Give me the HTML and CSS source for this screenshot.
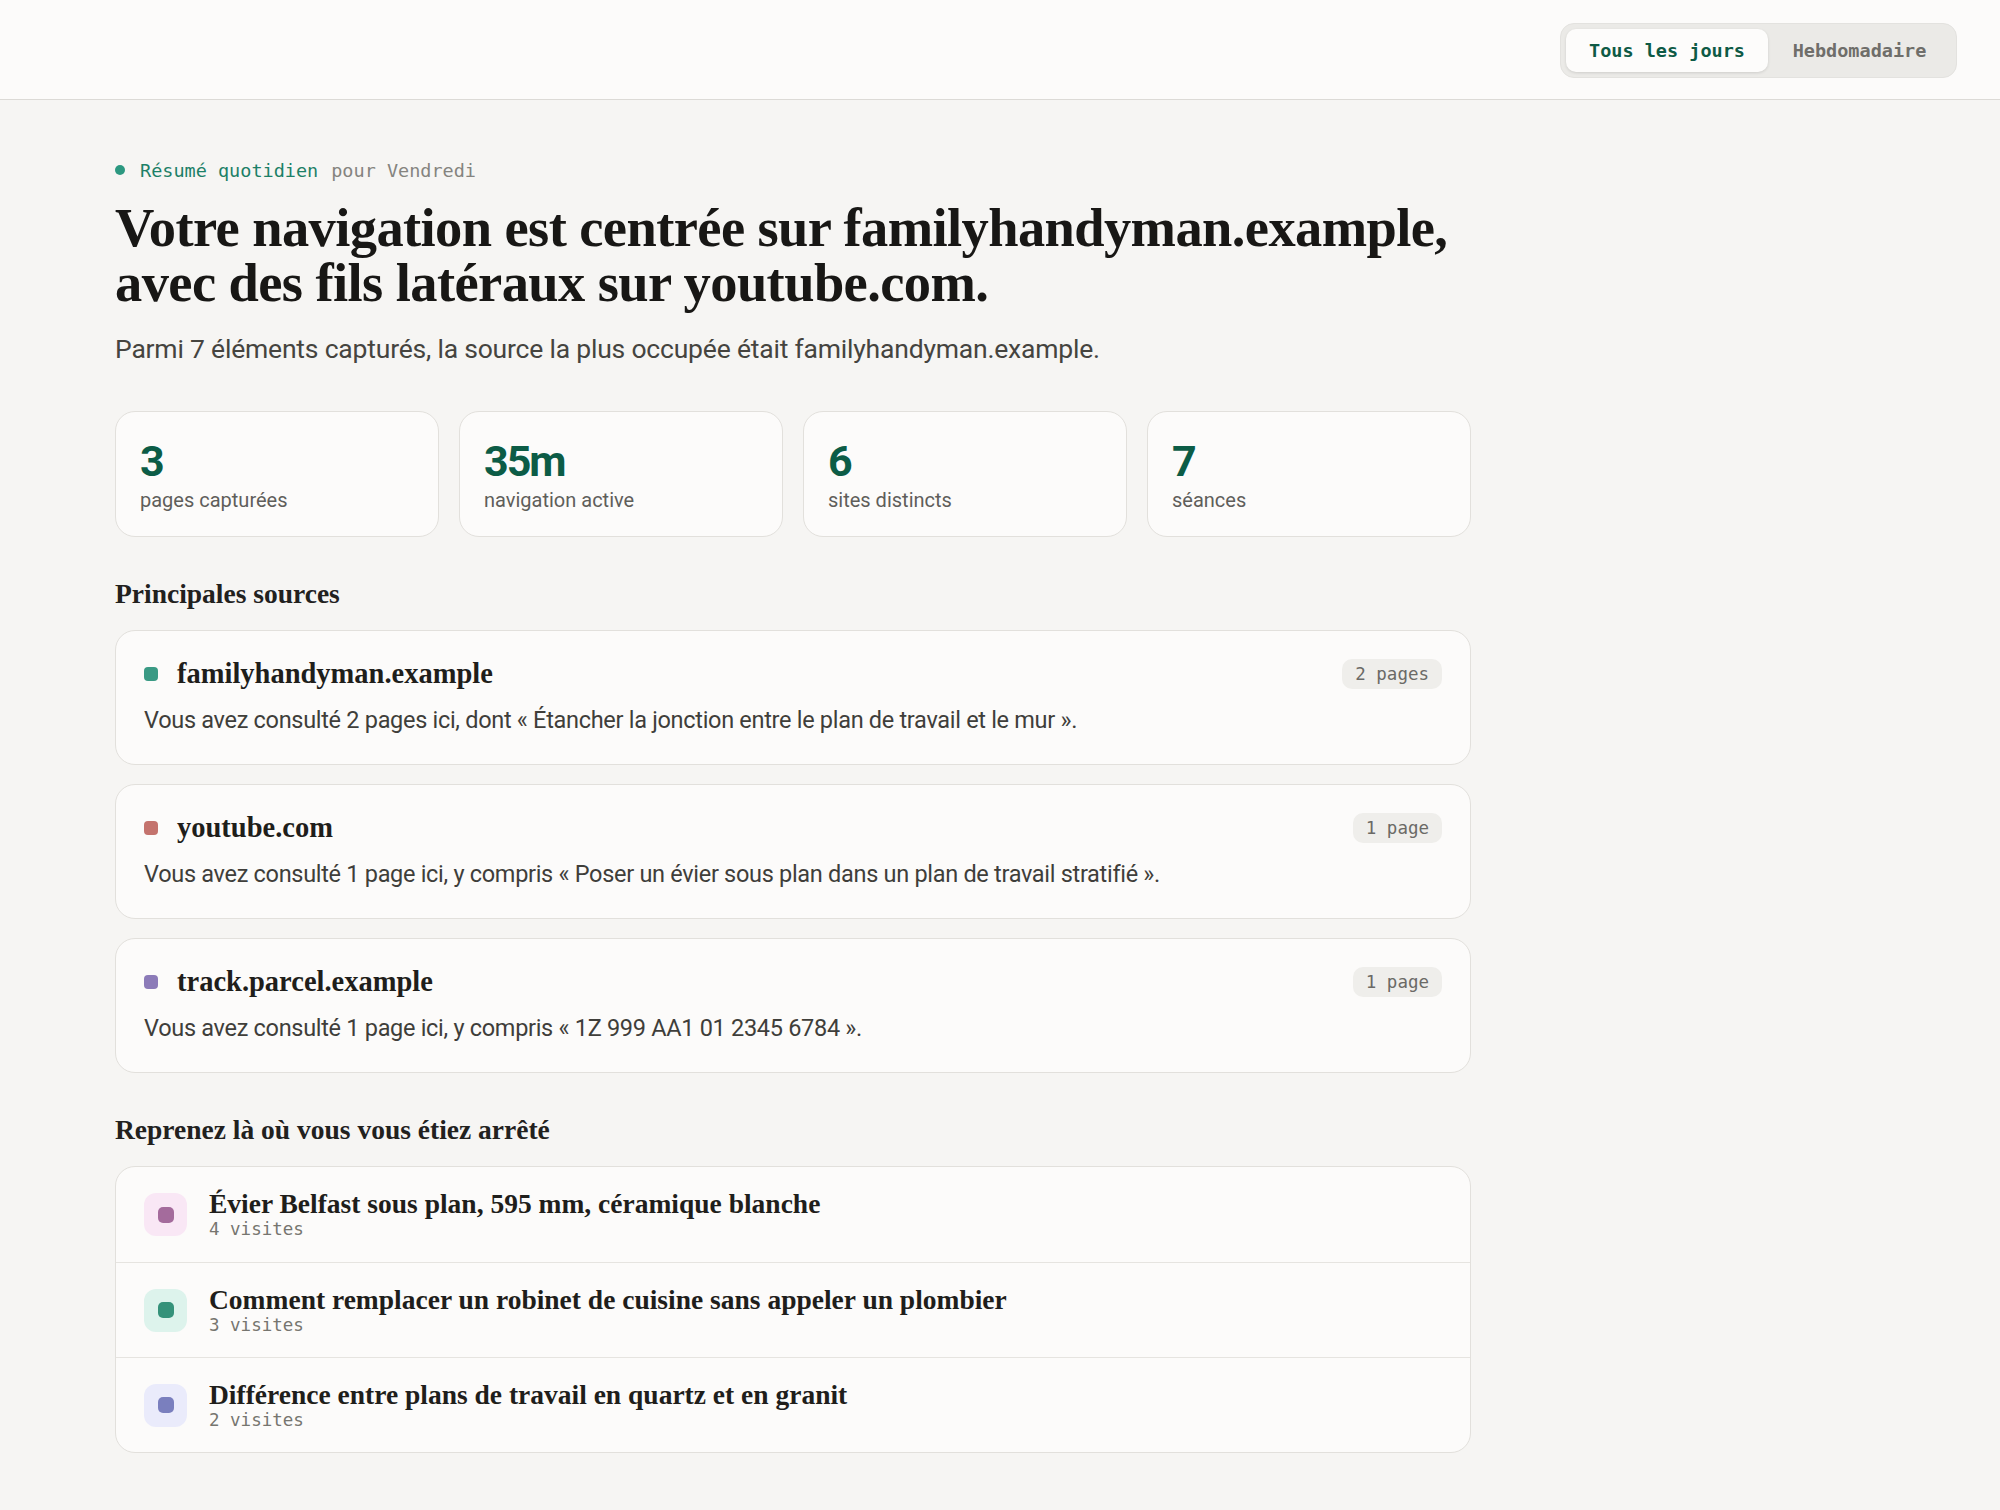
FILE: index.html
```html
<!DOCTYPE html>
<html lang="fr">
<head>
    <meta charset="UTF-8">
    <meta name="viewport" content="width=device-width, initial-scale=1.0">
    <title>Résumé quotidien</title>
    <link rel="stylesheet" href="styles.css">
</head>
<body>

    <header class="top-bar">
        <div class="range-toggle">
            <button class="range-btn active">Tous les jours</button>
            <button class="range-btn">Hebdomadaire</button>
        </div>
    </header>

    <main class="digest">
        <div class="eyebrow">
            <span class="eyebrow-dot"></span>
            <span class="eyebrow-label">Résumé quotidien</span>
            <span class="eyebrow-day">pour Vendredi</span>
        </div>

        <h1 class="headline">Votre navigation est centrée sur familyhandyman.example, avec des fils latéraux sur youtube.com.</h1>
        <p class="lede">Parmi 7 éléments capturés, la source la plus occupée était familyhandyman.example.</p>

        <!-- Stats row -->
        <div class="stats">
            <div class="stat-card">
                <div class="stat-value">3</div>
                <div class="stat-label">pages capturées</div>
            </div>
            <div class="stat-card">
                <div class="stat-value">35m</div>
                <div class="stat-label">navigation active</div>
            </div>
            <div class="stat-card">
                <div class="stat-value">6</div>
                <div class="stat-label">sites distincts</div>
            </div>
            <div class="stat-card">
                <div class="stat-value">7</div>
                <div class="stat-label">séances</div>
            </div>
        </div>

        <h2 class="section-title">Principales sources</h2>
        <div class="sources">
            <div class="source-card">
                <div class="source-head">
                    <span class="source-dot teal"></span>
                    <span class="source-name">familyhandyman.example</span>
                    <span class="badge">2 pages</span>
                </div>
                <p class="source-text">Vous avez consulté 2 pages ici, dont « Étancher la jonction entre le plan de travail et le mur ».</p>
            </div>
            <div class="source-card">
                <div class="source-head">
                    <span class="source-dot rose"></span>
                    <span class="source-name">youtube.com</span>
                    <span class="badge">1 page</span>
                </div>
                <p class="source-text">Vous avez consulté 1 page ici, y compris « Poser un évier sous plan dans un plan de travail stratifié ».</p>
            </div>
            <div class="source-card">
                <div class="source-head">
                    <span class="source-dot violet"></span>
                    <span class="source-name">track.parcel.example</span>
                    <span class="badge">1 page</span>
                </div>
                <p class="source-text">Vous avez consulté 1 page ici, y compris « 1Z 999 AA1 01 2345 6784 ».</p>
            </div>
        </div>

        <h2 class="section-title">Reprenez là où vous vous étiez arrêté</h2>
        <div class="resume-list">
            <div class="resume-row">
                <span class="resume-icon pink"><span></span></span>
                <div class="resume-body">
                    <div class="resume-title">Évier Belfast sous plan, 595 mm, céramique blanche</div>
                    <div class="resume-meta">4 visites</div>
                </div>
            </div>
            <div class="resume-row">
                <span class="resume-icon mint"><span></span></span>
                <div class="resume-body">
                    <div class="resume-title">Comment remplacer un robinet de cuisine sans appeler un plombier</div>
                    <div class="resume-meta">3 visites</div>
                </div>
            </div>
            <div class="resume-row">
                <span class="resume-icon lilac"><span></span></span>
                <div class="resume-body">
                    <div class="resume-title">Différence entre plans de travail en quartz et en granit</div>
                    <div class="resume-meta">2 visites</div>
                </div>
            </div>
        </div>
    </main>

</body>
</html>
```

FILE: styles.css
```css
/* Reset */
* {
    margin: 0;
    padding: 0;
    box-sizing: border-box;
}

body {
    font-family: Roboto, 'Liberation Sans', sans-serif;
    color: #1d1c1a;
    background-color: #f6f5f3;
    min-height: 100vh;
}

/* Top bar with range toggle */
.top-bar {
    height: 100px;
    display: flex;
    justify-content: flex-end;
    align-items: flex-start;
    padding: 23px 43px 0 0;
    background-color: #fcfbfa;
    border-bottom: 1px solid #dcdad6;
}

.range-toggle {
    display: flex;
    padding: 5px;
    background-color: #ebeae7;
    border: 1px solid #e3e2df;
    border-radius: 14px;
}

.range-btn {
    height: 43px;
    padding: 0 18px;
    font-family: 'DejaVu Sans Mono', 'Liberation Mono', monospace;
    font-size: 18.5px;
    font-weight: bold;
    color: #6f6e6a;
    background: none;
    border: none;
    border-radius: 10px;
    cursor: pointer;
}

.range-btn.active {
    width: 202px;
    color: #0e5a45;
    background-color: #fdfcfb;
    box-shadow: 0 1px 3px rgba(0, 0, 0, 0.12);
}

.range-btn + .range-btn {
    width: 183px;
}

/* Main digest column */
.digest {
    width: 1356px;
    margin-left: 115px;
    padding: 59px 0 60px;
}

.eyebrow {
    display: flex;
    align-items: center;
    height: 22px;
    font-family: 'DejaVu Sans Mono', 'Liberation Mono', monospace;
    font-size: 18.5px;
}

.eyebrow-dot {
    width: 10px;
    height: 10px;
    margin-right: 15px;
    border-radius: 50%;
    background-color: #2c9880;
}

.eyebrow-label {
    color: #1c8067;
    margin-right: 13px;
}

.eyebrow-day {
    color: #85847f;
}

.headline {
    margin-top: 19px;
    font-family: 'Liberation Serif', 'DejaVu Serif', serif;
    font-size: 54.5px;
    line-height: 55px;
    font-weight: bold;
    letter-spacing: -0.6px;
    color: #181715;
    max-width: 1360px;
}

.lede {
    margin-top: 22px;
    font-size: 26.5px;
    line-height: 34px;
    color: #45443f;
    letter-spacing: -0.2px;
}

/* Stat cards */
.stats {
    display: grid;
    grid-template-columns: repeat(4, 1fr);
    gap: 20px;
    margin-top: 45px;
}

.stat-card {
    height: 126px;
    padding: 26px 24px;
    background-color: #fcfbfa;
    border: 1.5px solid #e2e0dc;
    border-radius: 20px;
}

.stat-value {
    font-size: 43px;
    line-height: 46px;
    font-weight: bold;
    color: #0c5c46;
    letter-spacing: -2px;
}

.stat-label {
    margin-top: 3px;
    font-size: 20px;
    line-height: 26px;
    color: #5f5e5a;
}

/* Section headings */
.section-title {
    margin-top: 42px;
    font-family: 'Liberation Serif', 'DejaVu Serif', serif;
    font-size: 27.5px;
    line-height: 30px;
    font-weight: bold;
    color: #22211e;
}

/* Top sources */
.sources {
    display: flex;
    flex-direction: column;
    gap: 19px;
    margin-top: 21px;
}

.source-card {
    height: 135px;
    padding: 28px 28px 0;
    background-color: #fcfbfa;
    border: 1.5px solid #e2e0dc;
    border-radius: 20px;
}

.source-head {
    display: flex;
    align-items: center;
    height: 30px;
}

.source-dot {
    width: 14px;
    height: 14px;
    margin-right: 19px;
    border-radius: 4px;
}

.source-dot.teal { background-color: #3a9a84; }
.source-dot.rose { background-color: #c4736d; }
.source-dot.violet { background-color: #8c7bb8; }

.source-name {
    flex-grow: 1;
    font-family: 'Liberation Serif', 'DejaVu Serif', serif;
    font-size: 28.5px;
    font-weight: bold;
    color: #1f1e1b;
}

.badge {
    padding: 0 13px;
    height: 30px;
    line-height: 30px;
    font-family: 'DejaVu Sans Mono', 'Liberation Mono', monospace;
    font-size: 17.5px;
    color: #6b6a66;
    background-color: #efeeeb;
    border-radius: 10px;
}

.source-text {
    margin-top: 16px;
    font-size: 23.5px;
    line-height: 30px;
    color: #3f3e3a;
    letter-spacing: -0.3px;
}

/* Resume list */
.resume-list {
    margin-top: 21px;
    background-color: #fcfbfa;
    border: 1.5px solid #e2e0dc;
    border-radius: 20px;
    overflow: hidden;
}

.resume-row {
    display: flex;
    align-items: center;
    gap: 22px;
    height: 95px;
    padding: 0 28px;
}

.resume-row + .resume-row {
    border-top: 1.5px solid #e6e4e0;
}

.resume-icon {
    display: flex;
    justify-content: center;
    align-items: center;
    width: 43px;
    height: 43px;
    border-radius: 12px;
}

.resume-icon span {
    width: 16px;
    height: 16px;
    border-radius: 5px;
}

.resume-icon.pink { background-color: #f9e7f5; }
.resume-icon.pink span { background-color: #a46b9c; }
.resume-icon.mint { background-color: #ddf3ec; }
.resume-icon.mint span { background-color: #35927a; }
.resume-icon.lilac { background-color: #eaebfb; }
.resume-icon.lilac span { background-color: #7a7fbe; }

.resume-title {
    font-family: 'Liberation Serif', 'DejaVu Serif', serif;
    font-size: 27.5px;
    line-height: 30px;
    font-weight: bold;
    color: #1f1e1b;
}

.resume-meta {
    font-family: 'DejaVu Sans Mono', 'Liberation Mono', monospace;
    font-size: 17.5px;
    line-height: 21px;
    color: #76756f;
}
```
